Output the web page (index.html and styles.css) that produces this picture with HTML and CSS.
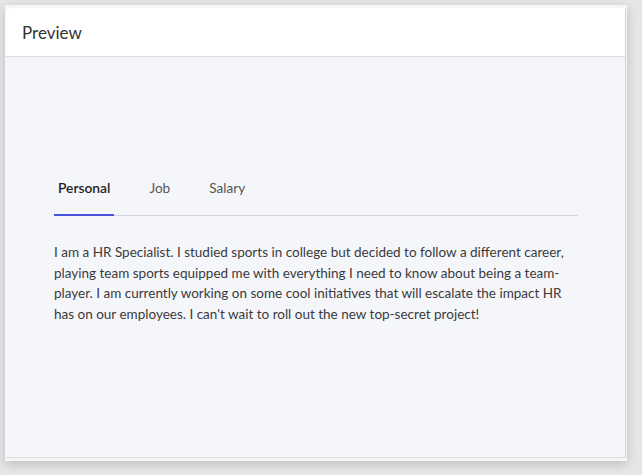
FILE: index.html
```html
<!DOCTYPE html>
<html>
<head>
<meta charset="utf-8">
<link rel="stylesheet" href="styles.css">
</head>
<body>
<div class="frame">
  <div class="card">
    <div class="header">Preview</div>
    <div class="content">
      <div class="tabs">
        <div class="tab active">Personal</div>
        <div class="tab">Job</div>
        <div class="tab">Salary</div>
      </div>
      <p class="text">I am a HR Specialist. I studied sports in college but decided to follow a different career, playing team sports equipped me with everything I need to know about being a team-player. I am currently working on some cool initiatives that will escalate the impact HR has on our employees. I can't wait to roll out the new top-secret project!</p>
    </div>
  </div>
</div>
</body>
</html>
```
FILE: styles.css
```css
html, body {
  margin: 0;
  padding: 0;
  background: #e6e6e6;
  font-family: Lato, "Open Sans", sans-serif;
}
body {
  width: 642px;
  height: 475px;
  overflow: hidden;
  padding-top: 5px;
  padding-left: 5px;
  box-sizing: border-box;
}
.frame {
  width: 622px;
  height: 456px;
  background: #f6f6f6;
  box-shadow: 0 3px 10px rgba(0, 0, 0, 0.18);
  padding: 3px 1px 0 1px;
  box-sizing: border-box;
}
.card {
  height: 450px;
  border-radius: 5px 0 0 0;
  background: #f5f6fa;
  border-right: 1px solid #d3d3d6;
  border-bottom: 1px solid #dcdcde;
  box-sizing: border-box;
  overflow: hidden;
}
.header {
  height: 48px;
  background: #ffffff;
  border-bottom: 1px solid #dcdde4;
  display: flex;
  align-items: center;
  padding-left: 16px;
  font-size: 17px;
  color: #333333;
}
.content {
  padding: 123px 47px 0 48px;
}
.tabs {
  display: flex;
  box-shadow: inset 0 -1px 0 #d3d3df;
}
.tab {
  padding: 0 4px 18px 4px;
  margin-right: 31px;
  font-size: 13.6px;
  line-height: 16px;
  color: #555555;
  border-bottom: 2px solid transparent;
}
.tab.active {
  color: #1f1f24;
  font-weight: 600;
  font-size: 13.8px;
  border-bottom-color: #4654e0;
}
.text {
  margin: 26px 0 0 0;
  font-size: 13.5px;
  line-height: 20.7px;
  color: #3a3a3c;
}
```
